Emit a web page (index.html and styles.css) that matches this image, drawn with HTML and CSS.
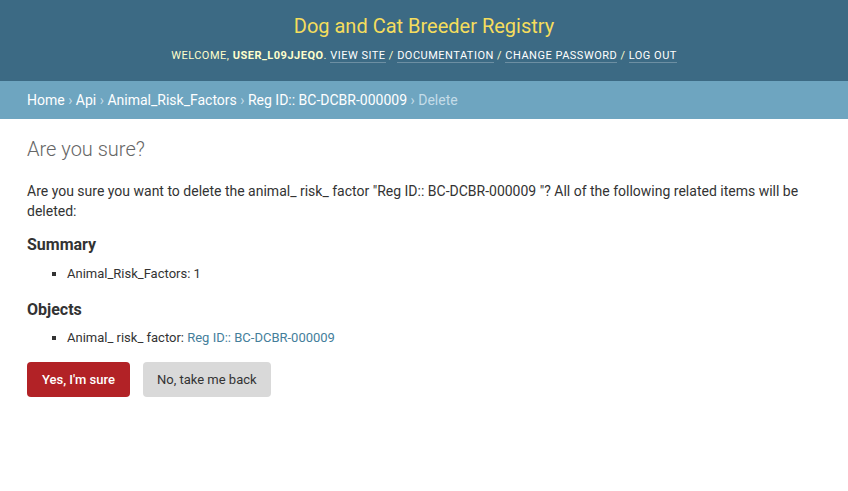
FILE: index.html
```html
<!DOCTYPE html>
<html lang="en">
<head>
<meta charset="utf-8">
<title>Are you sure?</title>
<link rel="stylesheet" href="styles.css">
</head>
<body>
<div class="header">
  <h1 class="site-name">Dog and Cat Breeder Registry</h1>
  <div class="user-tools">Welcome, <strong>user_l09jjeqo</strong>. <a href="#">View site</a> / <a href="#">Documentation</a> / <a href="#">Change password</a> / <a href="#">Log out</a></div>
</div>
<div class="breadcrumbs"><a href="#">Home</a> › <a href="#">Api</a> › <a href="#">Animal_Risk_Factors</a> › <a href="#">Reg ID:: BC-DCBR-000009</a> › Delete</div>
<div class="content">
  <h1 class="title">Are you sure?</h1>
  <p class="intro">Are you sure you want to delete the animal_ risk_ factor "Reg ID:: BC-DCBR-000009 "? All of the following related items will be deleted:</p>
  <h2 class="sub">Summary</h2>
  <ul class="list">
    <li>Animal_Risk_Factors: 1</li>
  </ul>
  <h2 class="sub sub-next">Objects</h2>
  <ul class="list">
    <li>Animal_ risk_ factor: <a href="#">Reg ID:: BC-DCBR-000009</a></li>
  </ul>
  <form class="actions">
    <button type="button" class="btn-yes">Yes, I'm sure</button>
    <a href="#" class="btn-no">No, take me back</a>
  </form>
</div>
</body>
</html>
```
FILE: styles.css
```css
html, body { margin: 0; padding: 0; }
body {
  font-family: Roboto, "Liberation Sans", sans-serif;
  font-size: 14px;
  color: #333;
  background: #fff;
}
a { text-decoration: none; }
.header {
  background: #3c6a84;
  padding: 14px 30px 15px;
  display: flex;
  flex-direction: column;
  align-items: center;
}
.site-name {
  margin: 0 0 8px;
  font-size: 20px;
  line-height: 24px;
  font-weight: 400;
  color: #f5dd5d;
}
.user-tools {
  font-size: 11px;
  line-height: 20px;
  letter-spacing: 0.5px;
  text-transform: uppercase;
  color: #ffc;
}
.user-tools strong { font-weight: 700; }
.user-tools a {
  color: #fff;
  border-bottom: 1px solid rgba(255,255,255,0.25);
}
.breadcrumbs {
  background: #6ea5c0;
  padding: 10px 27px;
  line-height: 18px;
  font-size: 14px;
  color: #c4dce8;
}
.breadcrumbs a { color: #fff; }
.content { padding: 18px 27px; }
.title {
  margin: 0 0 20px;
  font-size: 20px;
  line-height: 24px;
  font-weight: 300;
  color: #666;
}
.intro { margin: 0 0 12px; line-height: 20px; }
.sub {
  margin: 14px 0 8px;
  font-size: 16px;
  line-height: 20px;
  font-weight: 700;
}
.sub-next { margin-top: 15px; margin-bottom: 7px; }
.list { margin: 0; padding-left: 40px; }
.list li {
  list-style-type: square;
  font-size: 13px;
  line-height: 20px;
  padding: 1px 0;
}
.list a { color: #447e9b; }
.actions { margin-top: 13px; display: flex; align-items: center; }
.btn-yes {
  font-family: inherit;
  background: #b22226;
  color: #fff;
  border: none;
  border-radius: 4px;
  padding: 10px 15px;
  font-size: 13px;
  line-height: 15px;
  height: 35px;
  font-weight: 500;
}
.btn-no {
  margin-left: 13px;
  background: #d9d9d9;
  color: #333;
  border-radius: 4px;
  padding: 10px 14px;
  font-size: 13px;
  line-height: 15px;
}
```
